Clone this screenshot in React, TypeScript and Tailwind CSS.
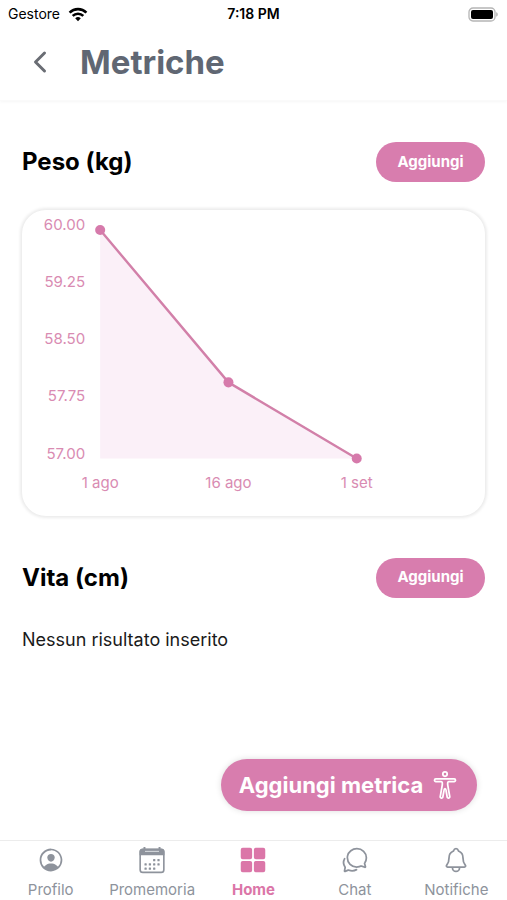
import type { ReactNode } from "react";
import {
  IoBodyOutline,
  IoChatbubblesOutline,
  IoChevronBack,
  IoGrid,
  IoNotificationsOutline,
  IoPersonCircleOutline,
} from "react-icons/io5";

const yLabels = ["60.00", "59.25", "58.50", "57.75", "57.00"];

const points = [
  { x: 78, y: 20, label: "1 ago" },
  { x: 206, y: 172, label: "16 ago" },
  { x: 334, y: 248, label: "1 set" },
];

const calendarDots = [
  [15, 13],
  [19, 13],
  [7, 17],
  [11, 17],
  [15, 17],
  [19, 17],
  [7, 21],
  [11, 21],
  [15, 21],
];

function WifiIcon() {
  return (
    <svg viewBox="0 0 20 15" className="h-[15px] w-5" fill="none" stroke="currentColor" strokeWidth="2.6" aria-hidden="true">
      <path d="M1.6 5.6a12 12 0 0 1 16.8 0" />
      <path d="M4.7 8.9a7.6 7.6 0 0 1 10.6 0" />
      <path d="M10 14.2 7.2 11.3a4 4 0 0 1 5.6 0z" fill="currentColor" stroke="none" />
    </svg>
  );
}

function CalendarIcon() {
  return (
    <svg viewBox="0 0 26 26" className="size-7" aria-hidden="true">
      <rect x="2" y="3" width="22" height="21.5" rx="2.5" fill="none" stroke="currentColor" strokeWidth="1.5" />
      <path d="M1.5 8.5V5.2Q1.5 2.5 4.2 2.5H21.8Q24.5 2.5 24.5 5.2V8.5z" fill="currentColor" />
      <path d="M6 1v3M20 1v3" stroke="currentColor" strokeWidth="1.8" />
      <path d="M6.5 5h13" stroke="#d5d8dd" strokeWidth="1" />
      {calendarDots.map(([x, y]) => (
        <rect key={`${x}-${y}`} x={x - 1} y={y - 1} width="2.1" height="2.1" rx="0.5" fill="currentColor" />
      ))}
    </svg>
  );
}

function StatusBar() {
  return (
    <div className="grid h-7 grid-cols-3 items-center px-2 text-sm leading-5 text-black">
      <div className="flex items-center gap-2">
        <span>Gestore</span>
        <WifiIcon />
      </div>
      <span className="text-center font-semibold">7:18 PM</span>
      <svg viewBox="0 0 31 15" className="h-[15px] w-[31px] justify-self-end" aria-label="Batteria">
        <rect x="1" y="1" width="26" height="13" rx="4" fill="#fff" stroke="#b5b5b5" strokeWidth="1.3" />
        <rect x="3" y="3" width="22" height="9" rx="2" fill="#000" />
        <path d="M28.3 5.3c1.8.6 1.8 3.8 0 4.4z" fill="#a5a5a5" />
      </svg>
    </div>
  );
}

function SectionHeader({ title }: { title: string }) {
  return (
    <div className="flex items-center justify-between">
      <h2 className="text-2xl font-bold text-black">{title}</h2>
      <button
        type="button"
        aria-label={`Aggiungi ${title}`}
        className="h-10 w-[109px] rounded-full bg-[#d87dae] text-[15px] font-bold text-white"
      >
        Aggiungi
      </button>
    </div>
  );
}

function WeightChart() {
  const line = points.map((p) => `${p.x},${p.y}`).join(" ");
  return (
    <div className="mt-7 rounded-[24px] bg-white shadow-[0_0_3px_2px_#ececec]">
      <svg viewBox="0 0 462 305" className="block w-full" role="img" aria-label="Peso (kg)">
        <polygon points={`78,248 ${line}`} fill="#fbf0f8" />
        <polyline points={line} fill="none" stroke="#d280a9" strokeWidth="2.4" strokeLinejoin="round" />
        {yLabels.map((label, i) => (
          <text key={label} x="63" y={20 + i * 57} textAnchor="end" fontSize="15" fill="#d98bb2">
            {label}
          </text>
        ))}
        {points.map((p) => (
          <g key={p.label}>
            <circle cx={p.x} cy={p.y} r="5" fill="#d67aab" />
            <text x={p.x} y="277" textAnchor="middle" fontSize="15" fill="#d98bb2">
              {p.label}
            </text>
          </g>
        ))}
      </svg>
    </div>
  );
}

function Tab({ icon, label, active = false }: { icon: ReactNode; label: string; active?: boolean }) {
  return (
    <a
      href="#"
      aria-current={active ? "page" : undefined}
      className={
        active
          ? "flex flex-col items-center gap-1 pt-[5px] text-[15px] leading-6 font-bold text-[#db76a8]"
          : "flex flex-col items-center gap-1 pt-[5px] text-[15px] leading-6 text-[#8e939c]"
      }
    >
      {icon}
      <span>{label}</span>
    </a>
  );
}

export default function App() {
  return (
    <div className="flex min-h-screen flex-col bg-white font-['Inter','Liberation_Sans',sans-serif]">
      <header className="border-b border-[#fafafa] shadow-[0_1px_3px_#f6f6f6]">
        <StatusBar />
        <div className="flex h-[72px] items-start gap-6 px-6">
          <button type="button" aria-label="Indietro" className="mt-[18px] text-[#6a6d74]">
            <IoChevronBack className="size-8" />
          </button>
          <h1 className="mt-3.5 text-[33px] leading-10 font-bold text-[#606773]">Metriche</h1>
        </div>
      </header>

      <div className="relative flex flex-1 flex-col">
        <main className="flex-1 px-[22px] pt-[41px]">
          <section>
            <SectionHeader title="Peso (kg)" />
            <WeightChart />
          </section>
          <section className="mt-[42px]">
            <SectionHeader title="Vita (cm)" />
            <p className="mt-7 text-lg leading-7 text-[#1a1a1a]">Nessun risultato inserito</p>
          </section>
        </main>
        <button
          type="button"
          className="absolute right-[30px] bottom-[29px] flex h-[52px] w-64 items-center justify-center gap-2 rounded-full bg-[#d87dae] text-[22px] font-bold text-white shadow-[0_0_6px_#dedede]"
        >
          <span>Aggiungi metrica</span>
          <IoBodyOutline className="size-7" />
        </button>
      </div>

      <nav className="grid h-[60px] grid-cols-5 border-t border-[#ececec]">
        <Tab label="Profilo" icon={<IoPersonCircleOutline className="size-7" />} />
        <Tab label="Promemoria" icon={<CalendarIcon />} />
        <Tab label="Home" active icon={<IoGrid className="size-7" />} />
        <Tab label="Chat" icon={<IoChatbubblesOutline className="size-7" />} />
        <Tab label="Notifiche" icon={<IoNotificationsOutline className="size-7" />} />
      </nav>
    </div>
  );
}
